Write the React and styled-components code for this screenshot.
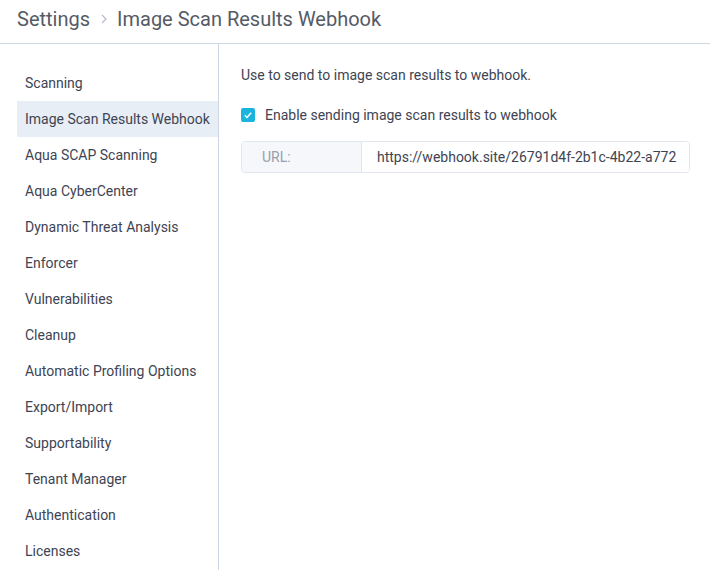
import React, { useState } from "react";
import styled, { createGlobalStyle } from "styled-components";

const GlobalStyle = createGlobalStyle`
  body {
    margin: 0;
    font-family: Roboto, "Liberation Sans", sans-serif;
    color: #3e4453;
    background: #fff;
  }
`;

const menu = [
  "Scanning",
  "Image Scan Results Webhook",
  "Aqua SCAP Scanning",
  "Aqua CyberCenter",
  "Dynamic Threat Analysis",
  "Enforcer",
  "Vulnerabilities",
  "Cleanup",
  "Automatic Profiling Options",
  "Export/Import",
  "Supportability",
  "Tenant Manager",
  "Authentication",
  "Licenses",
];

export default function App() {
  const [enabled, setEnabled] = useState(true);
  const active = "Image Scan Results Webhook";

  return (
    <Page>
      <GlobalStyle />
      <Header>
        <Crumb>Settings</Crumb>
        <Chevron viewBox="0 0 8 12">
          <path d="M2 2l4 4-4 4" fill="none" stroke="#b6bdc8" strokeWidth="1.2" />
        </Chevron>
        <Crumb>Image Scan Results Webhook</Crumb>
      </Header>
      <Body>
        <Sidebar>
          {menu.map((item) => (
            <MenuItem key={item} $active={item === active}>
              {item}
            </MenuItem>
          ))}
        </Sidebar>
        <Content>
          <Description>Use to send to image scan results to webhook.</Description>
          <CheckRow onClick={() => setEnabled(!enabled)}>
            <Box $checked={enabled}>
              {enabled && (
                <svg width="10" height="10" viewBox="0 0 10 10">
                  <path d="M1.8 5.2l2.2 2.2 4.2-4.6" fill="none" stroke="#fff" strokeWidth="1.4" />
                </svg>
              )}
            </Box>
            Enable sending image scan results to webhook
          </CheckRow>
          <InputGroup>
            <Addon>URL:</Addon>
            <UrlInput defaultValue="https://webhook.site/26791d4f-2b1c-4b22-a772" />
          </InputGroup>
        </Content>
      </Body>
    </Page>
  );
}

const Page = styled.div`
  width: 710px;
  height: 570px;
  display: flex;
  flex-direction: column;
  overflow: hidden;
`;

const Header = styled.div`
  height: 44px;
  box-sizing: border-box;
  border-bottom: 1px solid #cdd7e3;
  display: flex;
  align-items: center;
  padding: 0 0 6px 17px;
`;

const Crumb = styled.span`
  font-size: 20px;
  color: #555b66;
`;

const Chevron = styled.svg`
  width: 8px;
  height: 12px;
  margin: 1px 9px 0 10px;
`;

const Body = styled.div`
  flex: 1;
  display: flex;
`;

const Sidebar = styled.div`
  width: 219px;
  border-right: 1px solid #cdd7e3;
  padding: 21px 0 0 17px;
  box-sizing: border-box;
  flex-shrink: 0;
`;

const MenuItem = styled.div`
  height: 36px;
  display: flex;
  align-items: center;
  padding-left: 8px;
  font-size: 14px;
  color: #3e4453;
  background: ${(p) => (p.$active ? "#e8eef6" : "transparent")};
  cursor: pointer;
`;

const Content = styled.div`
  flex: 1;
  padding: 21px 20px 0 22px;
`;

const Description = styled.div`
  font-size: 14px;
  height: 20px;
  line-height: 20px;
  color: #3e4453;
`;

const CheckRow = styled.label`
  display: flex;
  align-items: center;
  margin-top: 20px;
  height: 20px;
  font-size: 14px;
  color: #3e4453;
  cursor: pointer;
`;

const Box = styled.span`
  width: 14px;
  height: 14px;
  border-radius: 2px;
  margin-right: 10px;
  display: flex;
  align-items: center;
  justify-content: center;
  background: ${(p) => (p.$checked ? "#1ab4de" : "#fff")};
  border: ${(p) => (p.$checked ? "none" : "1px solid #c3cad6")};
  box-sizing: border-box;
`;

const InputGroup = styled.div`
  margin-top: 16px;
  display: flex;
  height: 32px;
  border: 1px solid #e1e6ee;
  border-radius: 4px;
  box-sizing: border-box;
  overflow: hidden;
`;

const Addon = styled.div`
  width: 120px;
  flex-shrink: 0;
  background: #f5f7fa;
  border-right: 1px solid #e1e6ee;
  display: flex;
  align-items: center;
  padding-left: 20px;
  box-sizing: border-box;
  font-size: 14px;
  color: #98a0ad;
`;

const UrlInput = styled.input`
  flex: 1;
  min-width: 0;
  border: none;
  outline: none;
  padding: 0 0 0 15px;
  font-family: Roboto, "Liberation Sans", sans-serif;
  font-size: 14px;
  color: #3e4453;
  background: #fff;
`;
